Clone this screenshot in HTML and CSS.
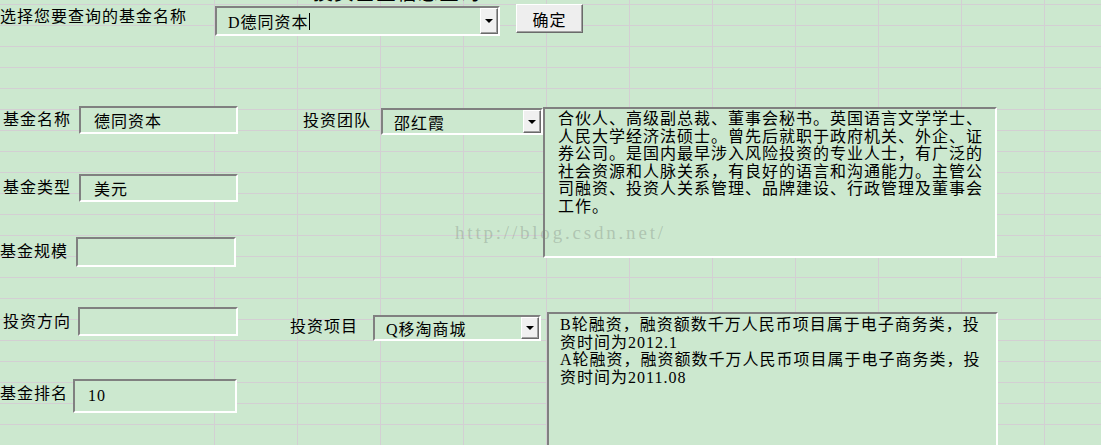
FILE: index.html
```html
<!DOCTYPE html>
<html lang="zh-CN">
<head>
  <meta charset="UTF-8" />
  <title>基金查询</title>
  <link rel="stylesheet" href="styles.css">
</head>
<body>

  <div class="sheet">
    <div class="title"><span>投资基金信息查询</span></div>

    <div class="search-bar">
      <div class="search-label">选择您要查询的基金名称</div>
      <div class="combo combo-search">
        <span class="combo-text">D德同资本<span class="caret"></span></span>
        <span class="drop-btn"><span class="arrow"></span></span>
      </div>
      <button type="button" class="ok-btn">确定</button>
    </div>

    <div class="content">
      <div class="fields">
        <div class="field f-name">
          <span class="field-label">基金名称</span>
          <div class="box">德同资本</div>
        </div>
        <div class="field f-type">
          <span class="field-label">基金类型</span>
          <div class="box">美元</div>
        </div>
        <div class="field f-scale">
          <span class="field-label">基金规模</span>
          <div class="box"></div>
        </div>
        <div class="field f-dir">
          <span class="field-label">投资方向</span>
          <div class="box"></div>
        </div>
        <div class="field f-rank">
          <span class="field-label">基金排名</span>
          <div class="box">10</div>
        </div>
      </div>

      <div class="panels">
        <div class="group group-team">
          <span class="group-label">投资团队</span>
          <div class="combo combo-team">
            <span class="combo-text">邵红霞</span>
            <span class="drop-btn"><span class="arrow"></span></span>
          </div>
          <div class="memo memo-team">合伙人、高级副总裁、董事会秘书。英国语言文学学士、人民大学经济法硕士。曾先后就职于政府机关、外企、证券公司。是国内最早涉入风险投资的专业人士，有广泛的社会资源和人脉关系，有良好的语言和沟通能力。主管公司融资、投资人关系管理、品牌建设、行政管理及董事会工作。</div>
        </div>

        <div class="group group-project">
          <span class="group-label">投资项目</span>
          <div class="combo combo-project">
            <span class="combo-text">Q移淘商城</span>
            <span class="drop-btn"><span class="arrow"></span></span>
          </div>
          <div class="memo memo-project">
            <div>B轮融资，融资额数千万人民币项目属于电子商务类，投资时间为2012.1</div>
            <div>A轮融资，融资额数千万人民币项目属于电子商务类，投资时间为2011.08</div>
          </div>
        </div>
      </div>
    </div>

    <div class="watermark">http://blog.csdn.net/</div>
  </div>

</body>
</html>
```

FILE: styles.css
```css
html, body {
  margin: 0;
  height: 100%;
}

body {
  font-family: "Liberation Serif", "Noto Sans CJK SC", serif;
  font-size: 16px;
  letter-spacing: 1px;
  color: #000;
  overflow: hidden;
  background-color: #cce8cf;
  background-image:
    repeating-linear-gradient(to right, #d3cfd3 0 1px, transparent 1px 83px),
    repeating-linear-gradient(to bottom, #d3cfd3 0 1px, transparent 1px 21px);
  background-position: 214px 0, 0 4px;
  background-size: calc(100% - 214px) 100%, 100% calc(100% - 4px);
  background-repeat: no-repeat;
}

.sheet {
  position: relative;
  height: 100%;
}

/* title row, mostly scrolled out of view */
.title {
  height: 4px;
  overflow: hidden;
  margin-left: 313px;
  font-size: 20px;
  line-height: 24px;
}

.title span {
  display: block;
  margin-top: -19px;
}

/* search row */
.search-bar {
  display: flex;
  align-items: flex-start;
  height: 32px;
}

.search-label {
  width: 215px;
  margin-top: 3px;
  line-height: 20px;
  white-space: nowrap;
}

.combo {
  display: flex;
  box-sizing: border-box;
  border: 2px solid;
  border-color: #808080 #fff #fff #808080;
  background-color: #cce8cf;
}

.combo-text {
  flex: 1;
  display: flex;
  align-items: center;
  padding-left: 11px;
  white-space: nowrap;
}

.caret {
  display: inline-block;
  width: 1px;
  height: 17px;
  background-color: #000;
}

.drop-btn {
  width: 18px;
  box-sizing: border-box;
  border: 1px solid;
  border-color: #fff #6a6a6a #6a6a6a #fff;
  box-shadow: inset -1px -1px 0 #a0a0a0;
  background-color: #f0f0f0;
  display: flex;
  justify-content: center;
  align-items: center;
}

.arrow {
  width: 0;
  height: 0;
  border-left: 4px solid transparent;
  border-right: 4px solid transparent;
  border-top: 4px solid #000;
}

.combo-search {
  width: 285px;
  height: 30px;
  margin-top: 2px;
}

.ok-btn {
  width: 67px;
  height: 29px;
  margin-left: 16px;
  padding: 0;
  font: inherit;
  letter-spacing: 1px;
  color: #000;
  border: 1px solid;
  border-color: #fff #6a6a6a #6a6a6a #fff;
  box-shadow: inset -1px -1px 0 #a0a0a0;
  background-color: #eeeeee;
}

/* body of the sheet */
.content {
  display: flex;
  align-items: flex-start;
}

.fields {
  width: 238px;
  padding-top: 70px;
  display: flex;
  flex-direction: column;
}

.field {
  display: flex;
  align-items: center;
}

.field-label {
  padding-left: 3px;
  line-height: 20px;
  white-space: nowrap;
}

.box {
  box-sizing: border-box;
  width: 159px;
  height: 28px;
  margin-left: 8px;
  padding-left: 13px;
  border: 2px solid;
  border-color: #808080 #fff #fff #808080;
  background-color: #cce8cf;
  display: flex;
  align-items: center;
}

.f-type {
  margin-top: 40px;
}

.f-scale {
  margin-top: 35px;
}

.f-scale .field-label {
  padding-left: 0;
}

.f-scale .box {
  width: 160px;
  height: 30px;
}

.f-dir {
  margin-top: 40px;
}

.f-dir .box {
  width: 160px;
  height: 29px;
  margin-left: 7px;
}

.f-rank {
  margin-top: 43px;
}

.f-rank .field-label {
  padding-left: 0;
  margin-bottom: 4px;
}

.f-rank .box {
  width: 164px;
  height: 34px;
  margin-left: 5px;
}

.panels {
  padding-top: 71px;
  display: flex;
  flex-direction: column;
}

.group {
  display: flex;
  align-items: flex-start;
}

.group-label {
  line-height: 20px;
  white-space: nowrap;
}

.memo {
  box-sizing: border-box;
  border: 2px solid;
  border-color: #808080 #fff #fff #808080;
  background-color: #cce8cf;
  padding: 1px 8px 0 13px;
  line-height: 17.5px;
}

.group-team {
  padding-left: 65px;
}

.group-team .group-label {
  width: 78px;
  margin-top: 4px;
}

.combo-team {
  width: 162px;
  height: 27px;
  margin-top: 1px;
}

.memo-team {
  width: 454px;
  height: 151px;
}

.group-project {
  margin-top: 54px;
  padding-left: 52px;
}

.group-project .group-label {
  width: 83px;
  margin-top: 5px;
}

.combo-project {
  width: 168px;
  height: 26px;
  margin-top: 3px;
}

.memo-project {
  width: 451px;
  height: 140px;
  margin-left: 6px;
  padding-top: 2px;
  padding-left: 11px;
}

.watermark {
  position: absolute;
  left: 455px;
  top: 222px;
  font-size: 19px;
  letter-spacing: 2.8px;
  color: rgba(130, 140, 130, 0.4);
  pointer-events: none;
}
```
